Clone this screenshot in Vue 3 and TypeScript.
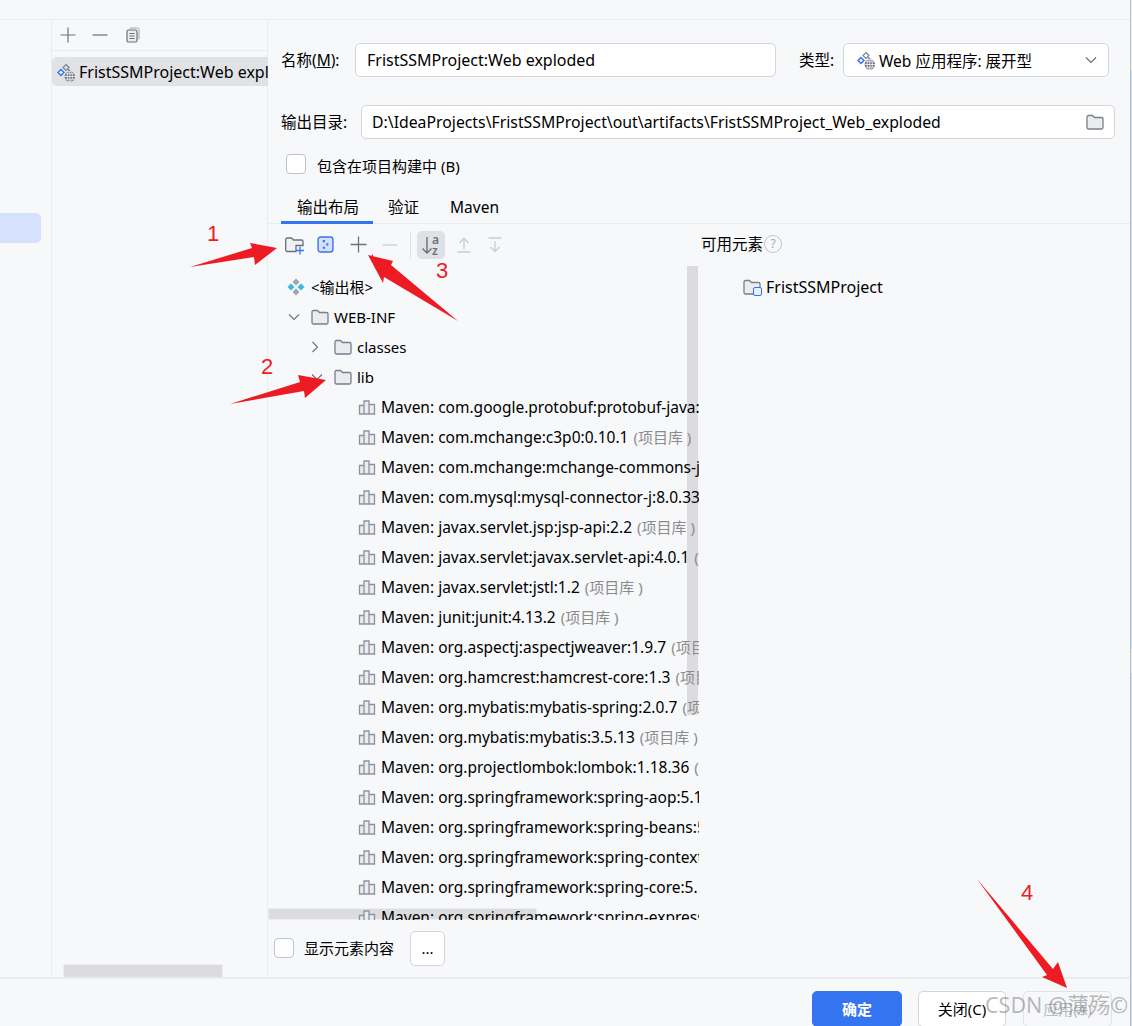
<script setup lang="ts">
interface Row { depth: number; icon: 'root' | 'folder' | 'lib'; text: string; chev?: 'down' | 'right'; suffix?: boolean }
const mavens: string[] = [
  'com.google.protobuf:protobuf-java:3.21.9',
  'com.mchange:c3p0:0.10.1',
  'com.mchange:mchange-commons-java:0.3.1',
  'com.mysql:mysql-connector-j:8.0.33',
  'javax.servlet.jsp:jsp-api:2.2',
  'javax.servlet:javax.servlet-api:4.0.1',
  'javax.servlet:jstl:1.2',
  'junit:junit:4.13.2',
  'org.aspectj:aspectjweaver:1.9.7',
  'org.hamcrest:hamcrest-core:1.3',
  'org.mybatis:mybatis-spring:2.0.7',
  'org.mybatis:mybatis:3.5.13',
  'org.projectlombok:lombok:1.18.36',
  'org.springframework:spring-aop:5.1.8',
  'org.springframework:spring-beans:5.1.8',
  'org.springframework:spring-context:5.1.8',
  'org.springframework:spring-core:5.1.8',
  'org.springframework:spring-expression:5.1.8',
]
const rows: Row[] = [
  { depth: 0, icon: 'root', text: '<输出根>' },
  { depth: 1, icon: 'folder', text: 'WEB-INF', chev: 'down' },
  { depth: 2, icon: 'folder', text: 'classes', chev: 'right' },
  { depth: 2, icon: 'folder', text: 'lib', chev: 'down' },
  ...mavens.map((m): Row => ({ depth: 3, icon: 'lib', text: 'Maven: ' + m, suffix: true })),
]
const arrows: string[] = [
  '190,267 252,248 250,243 277,248 255,265 254,257',
  '230,404 300,382 298,375 326,380 305,398 304,391',
  '458,321 391,265 393,261 368,255 383,283 384,277',
  '977,879 1053,969 1058,962 1067,988 1042,977 1047,975',
]
</script>

<template>
  <div class="app">
    <svg width="0" height="0" class="defs">
      <symbol id="artifact" viewBox="0 0 20 20">
        <path d="M10 2.500l3 3-3 3-3-3z" fill="none" stroke="#7e828f" stroke-width="1.200"/>
        <path d="M5 7.500l3 3-3 3-3-3z" fill="#e8effd" stroke="#3574f0" stroke-width="1.400"/>
        <path d="M12 7.500l2.500 2" fill="none" stroke="#3574f0" stroke-width="1.200"/>
        <circle cx="13.800" cy="14.500" r="5.200" fill="#6c707e"/>
        <path d="M8.600 14.500h10.400M13.800 9.300v10.400M9.600 11.800h8.400M9.600 17.200h8.400" stroke="#f7f8fa" stroke-width=".8"/>
        <ellipse cx="13.800" cy="14.500" rx="2.600" ry="5.200" fill="none" stroke="#f7f8fa" stroke-width=".8"/>
      </symbol>
      <symbol id="folder" viewBox="0 0 18 16">
        <path d="M1 3a1.500 1.500 0 0 1 1.500-1.500h4l2 2h7A1.500 1.500 0 0 1 17 5v8.500a1.500 1.500 0 0 1-1.500 1.500h-13A1.500 1.500 0 0 1 1 13.500z" fill="#ebecf0" stroke="#7a7e8b" stroke-width="1.300"/>
      </symbol>
      <symbol id="lib" viewBox="0 0 18 16">
        <path d="M1.500 6.500h4.500v8.500H1.500zM6 2h5v13H6zM11 5.500h5.500V15H11z" fill="#ebecf0" stroke="#8f929e" stroke-width="1.300"/>
      </symbol>
      <symbol id="root" viewBox="0 0 18 18">
        <path d="M9 .5l3.500 3.500L9 7.500 5.500 4z" fill="#9aa7b0"/>
        <path d="M4 5.500L7.500 9 4 12.500.5 9z" fill="#40b6e0"/>
        <path d="M14 5.500L17.500 9 14 12.500 10.500 9z" fill="#40b6e0"/>
        <path d="M9 10.500l3.500 3.500L9 17.500 5.500 14z" fill="#9aa7b0"/>
      </symbol>
    </svg>

    <div class="topstrip"></div>

    <div class="body">
      <aside class="side"><div class="side-sel"></div></aside>

      <section class="middle">
        <div class="mid-tools">
          <svg class="ic16" viewBox="0 0 16 16"><path d="M8 .5v15M.5 8h15" stroke="#6c707e" stroke-width="1.200" fill="none"/></svg>
          <svg class="ic16" viewBox="0 0 16 16"><path d="M.5 8h15" stroke="#6c707e" stroke-width="1.200" fill="none"/></svg>
          <svg class="ic16 copy" viewBox="0 0 16 16"><path d="M5 2.500V2a1 1 0 0 1 1-1h6.500a1.500 1.500 0 0 1 1.500 1.500V11a1 1 0 0 1-1 1" stroke="#a0a3ad" fill="none"/><rect x="2" y="3" width="10" height="12" rx="1.500" fill="#ebecf0" stroke="#6c707e" stroke-width="1.200"/><path d="M4.500 6.500h5M4.500 9h5M4.500 11.500h5" stroke="#6c707e"/></svg>
        </div>
        <div class="artifact-row">
          <svg class="ic20"><use href="#artifact"/></svg>
          <span>FristSSMProject:Web exploded</span>
        </div>
        <div class="mid-scroll"></div>
      </section>

      <main class="main">
        <div class="form-row first">
          <label class="lbl lbl-name">名称(<u>M</u>):</label>
          <div class="field name-field">FristSSMProject:Web exploded</div>
          <label class="lbl lbl-type">类型:</label>
          <div class="field type-field">
            <svg class="ic20"><use href="#artifact"/></svg>
            <span class="type-text">Web 应用程序: 展开型</span>
            <svg class="caret" viewBox="0 0 12 8"><path d="M1 1.500l5 5 5-5" fill="none" stroke="#6c707e" stroke-width="1.200"/></svg>
          </div>
        </div>

        <div class="form-row second">
          <label class="lbl lbl-out">输出目录:</label>
          <div class="field out-field">
            <span class="out-text">D:\IdeaProjects\FristSSMProject\out\artifacts\FristSSMProject_Web_exploded</span>
            <svg class="ic-folder-out"><use href="#folder"/></svg>
          </div>
        </div>

        <div class="check-row">
          <span class="checkbox"></span>
          <span class="check-text">包含在项目构建中 (B)</span>
        </div>

        <div class="tabs">
          <div class="tab active">输出布局</div>
          <div class="tab t2">验证</div>
          <div class="tab t3">Maven</div>
        </div>

        <div class="panes">
          <div class="left-pane">
            <div class="tree-tools">
              <svg class="tool t-folder" viewBox="0 0 20 20"><path d="M.7 15V4.500A1.500 1.500 0 0 1 2.200 3h4.300l2 2h8a1.500 1.500 0 0 1 1.500 1.500V10.500H11V16.500H2.200A1.500 1.500 0 0 1 .7 15z" fill="#f0f1f4" stroke="#6c707e" stroke-width="1.300"/><path d="M15 11.500v8M11 15.500h8" stroke="#3574f0" stroke-width="1.300"/></svg>
              <svg class="tool t-blue" viewBox="0 0 16 16"><rect x="1" y="1" width="14" height="14" rx="2.500" fill="#d5e1fb" stroke="#3574f0" stroke-width="1.300"/><path d="M5.500 3.800h2v2h-2zM8.700 6.900h2v2h-2zM5.500 10.100h2v2h-2z" fill="#3574f0"/></svg>
              <span class="plus-wrap">
                <svg class="tool t-plus" viewBox="0 0 16 16"><path d="M8 .5v15M.5 8h15" stroke="#6c707e" stroke-width="1.200"/></svg>
                <span class="corner"></span>
              </span>
              <svg class="tool t-minus" viewBox="0 0 16 16"><path d="M.5 8h15" stroke="#c9ccd6" stroke-width="1.200"/></svg>
              <span class="divider"></span>
              <span class="sort-btn">
                <svg viewBox="0 0 24 24" width="24" height="24"><path d="M9 4v16M4.500 15.500L9 20l4.500-4.500" fill="none" stroke="#6c707e" stroke-width="1.400"/></svg>
                <span class="az">a<br>z</span>
              </span>
              <svg class="tool t-up" viewBox="0 0 16 16"><path d="M8 12V1.500M3.500 6L8 1.500 12.500 6M1.500 15h13" fill="none" stroke="#c9ccd6" stroke-width="1.300"/></svg>
              <svg class="tool t-down" viewBox="0 0 16 16"><path d="M8 4v10.500M3.500 10L8 14.500 12.500 10M1.500 1h13" fill="none" stroke="#c9ccd6" stroke-width="1.300"/></svg>
            </div>
            <div class="tree">
              <div class="v-scroll"></div>
              <div class="h-scroll"></div>
              <div v-for="(r, i) in rows" :key="i" class="row" :class="'d' + r.depth">
                <span v-if="r.depth > 0" class="chev">
                  <svg v-if="r.chev === 'down'" viewBox="0 0 12 8" width="12" height="8"><path d="M1 1.500l5 5 5-5" fill="none" stroke="#6c707e" stroke-width="1.100"/></svg>
                  <svg v-else-if="r.chev === 'right'" viewBox="0 0 8 12" width="8" height="12"><path d="M1.500 1l5 5-5 5" fill="none" stroke="#6c707e" stroke-width="1.100"/></svg>
                </span>
                <svg class="row-ic"><use :href="'#' + r.icon"/></svg>
                <span class="row-text">{{ r.text }}</span>
                <span v-if="r.suffix" class="suffix">(项目库 )</span>
              </div>
            </div>
            <div class="show-row">
              <span class="checkbox small"></span>
              <span>显示元素内容</span>
              <button class="dots" type="button">...</button>
            </div>
          </div>

          <div class="right-pane">
            <div class="avail">可用元素<span class="help">?</span></div>
            <div class="avail-item">
              <span class="avail-ic">
                <svg class="avail-folder"><use href="#folder"/></svg>
                <span class="avail-badge"></span>
              </span>
              <span>FristSSMProject</span>
            </div>
          </div>
        </div>
      </main>
    </div>

    <footer class="footer">
      <button class="btn primary" type="button">确定</button>
      <button class="btn close" type="button">关闭(C)</button>
      <button class="btn disabled" type="button">应用(A)</button>
    </footer>

    <svg class="marks" viewBox="0 0 1132 1026" width="1132" height="1026">
      <polygon v-for="(p, i) in arrows" :key="i" :points="p" fill="#ed1c24"/>
    </svg>
    <span class="num n1">1</span>
    <span class="num n2">2</span>
    <span class="num n3">3</span>
    <span class="num n4">4</span>
    <span class="watermark">CSDN @薄殇©</span>
    <span class="edge"></span>
  </div>
</template>

<style>
html, body { margin: 0; padding: 0; background: #f7f8fa; }
</style>

<style scoped>
* { box-sizing: border-box; }
.app {
  position: relative;
  width: 1132px;
  height: 1026px;
  overflow: hidden;
  display: flex;
  flex-direction: column;
  background: #f7f8fa;
  color: #000;
  font: 15.5px/20px "Noto Sans", "Noto Sans CJK SC", sans-serif;
}
.defs { position: absolute; }
.topstrip { height: 20px; flex: none; border-bottom: 1px solid #ebecf0; }
.body { flex: 1; display: flex; min-height: 0; }
.side { width: 52px; flex: none; border-right: 1px solid #ebecf0; padding-top: 193px; }
.side-sel { width: 41px; height: 30px; background: #d5e1ff; border-radius: 0 5px 5px 0; }
.middle { position: relative; width: 216px; flex: none; border-right: 1px solid #ebecf0; }
.mid-tools {
  height: 31px;
  display: flex;
  align-items: center;
  gap: 16px;
  padding-left: 8px;
  border-bottom: 1px solid #ebecf0;
}
.ic16 { width: 16px; height: 16px; }
.copy { margin-left: 1px; }
.artifact-row {
  margin-top: 6px;
  height: 29px;
  display: flex;
  align-items: center;
  gap: 3px;
  padding-left: 4px;
  margin-right: -1px;
  background: #e1e2e6;
  border-radius: 5px 0 0 5px;
  white-space: nowrap;
  overflow: hidden;
  font-size: 16px;
}
.ic20 { width: 20px; height: 20px; flex: none; }
.mid-scroll { position: absolute; left: 11px; bottom: 0; width: 160px; height: 13px; background: #dcdcde; border: 1px solid #eceef1; border-bottom: 0; }
.main { flex: 1; min-width: 0; display: flex; flex-direction: column; padding-top: 23px; }
.form-row { display: flex; align-items: center; height: 34px; padding-left: 13px; }
.second { margin-top: 28px; }
.lbl { white-space: nowrap; }
.field {
  height: 34px;
  background: #fff;
  border: 1px solid #d3d5db;
  border-radius: 5px;
  display: flex;
  align-items: center;
}
.lbl-name { width: 74px; }
.name-field { width: 421px; padding-left: 11px; font-size: 16px; }
.lbl-type { margin-left: 23px; width: 44px; }
.type-field { width: 266px; padding-left: 12px; padding-right: 11px; }
.type-text { margin-left: 3px; flex: 1; position: relative; top: 1px; }
.caret { width: 12px; height: 8px; }
.lbl-out { width: 80px; }
.out-field { width: 754px; padding-left: 10px; justify-content: space-between; padding-right: 10px; font-size: 15.8px; }
.ic-folder-out { width: 18px; height: 16px; }
.check-row { display: flex; align-items: center; gap: 11px; margin: 15px 0 0 18px; height: 20px; font-size: 15px; }
.check-text { position: relative; top: 2px; }
.checkbox {
  display: block;
  width: 20px;
  height: 20px;
  background: #fff;
  border: 1px solid #c0c3cf;
  border-radius: 4px;
  flex: none;
}
.tabs { display: flex; height: 33px; margin-top: 17px; border-bottom: 1px solid #ebecf0; padding-left: 13px; }
.tab { padding-top: 6px; }
.active { width: 92px; padding-left: 16px; border-bottom: 3px solid #3574f0; height: 33px; }
.t2 { margin-left: 15px; }
.t3 { margin-left: 31px; }
.panes { flex: 1; display: flex; min-height: 0; }
.left-pane { width: 431px; flex: none; display: flex; flex-direction: column; }
.tree-tools { height: 34px; flex: none; padding: 7px 0 0 17px; display: flex; align-items: center; }
.tool { width: 18px; height: 18px; flex: none; }
.t-folder { width: 20px; height: 20px; }
.t-blue { width: 17px; height: 17px; margin-left: 12px; }
.plus-wrap { position: relative; display: flex; margin-left: 16px; }
.t-plus { width: 17px; height: 17px; }
.corner { position: absolute; right: -6px; bottom: -5px; width: 0; height: 0; border-left: 4px solid transparent; border-bottom: 4px solid #6c707e; }
.t-minus { width: 16px; height: 16px; margin-left: 15px; }
.divider { width: 1px; height: 26px; margin-left: 12px; background: #dfe1e5; }
.sort-btn {
  position: relative;
  width: 28px;
  height: 28px;
  margin-left: 6px;
  background: #dfe1e5;
  border-radius: 5px;
  display: flex;
  align-items: center;
  padding-left: 1px;
}
.az { position: absolute; left: 15px; top: 3px; font-size: 12px; line-height: 11px; color: #6c707e; font-weight: 600; }
.t-up { width: 16px; height: 16px; margin-left: 11px; }
.t-down { width: 16px; height: 16px; margin-left: 15px; }
.tree { position: relative; flex: none; height: 662px; overflow: hidden; padding-top: 14px; }
.v-scroll { position: absolute; left: 419px; top: 8px; width: 11px; height: 449px; background: #dcdcde; }
.h-scroll { position: absolute; left: 0; top: 650px; width: 269px; height: 12px; background: #dcdcde; border: 1px solid #eceef1; }
.row { position: relative; height: 30px; display: flex; align-items: center; white-space: nowrap; overflow: hidden; font-size: 15px; }
.d3 { font-size: 15.5px; }
.d0 { padding-left: 19px; }
.d1 { padding-left: 20px; }
.d2 { padding-left: 43px; }
.d3 { padding-left: 67px; }
.chev { width: 24px; height: 30px; flex: none; display: flex; align-items: center; padding-left: 1px; margin-left: -1px; }
.d3 .chev { display: block; }
.row-ic { width: 18px; height: 16px; flex: none; }
.d0 .row-ic { width: 18px; height: 18px; }
.row-text { margin-left: 5px; }
.d0 .row-text { margin-left: 6px; }
.suffix { margin-left: 5px; color: #8c8c8c; font-size: 15px; }
.show-row { display: flex; align-items: center; padding-left: 6px; height: 44px; margin-top: 6px; position: relative; font-size: 15px; }
.small { margin-right: 10px; }
.dots {
  width: 35px;
  height: 35px;
  margin-left: 16px;
  background: #fff;
  border: 1px solid #d3d5db;
  border-radius: 5px;
  font: inherit;
  padding: 0;
}
.right-pane { flex: 1; }
.avail { height: 34px; padding: 5px 0 0 2px; display: flex; align-items: center; }
.help {
  width: 18px;
  height: 18px;
  margin-left: 1px;
  border: 1px solid #c0c3cf;
  border-radius: 50%;
  color: #a0a5b5;
  font-size: 12px;
  line-height: 16px;
  text-align: center;
}
.avail-item { display: flex; align-items: center; height: 30px; margin-top: 14px; padding-left: 44px; gap: 5px; font-size: 16px; }
.avail-ic { position: relative; display: block; width: 18px; height: 16px; }
.avail-folder { width: 18px; height: 16px; display: block; }
.avail-badge { position: absolute; right: -1px; bottom: -1px; width: 9px; height: 9px; background: #e8effd; border: 1px solid #3574f0; border-radius: 2px; }
.footer {
  height: 49px;
  flex: none;
  border-top: 2px solid #ebecf0;
  display: flex;
  gap: 16px;
  padding: 12px 20px 0 0;
  justify-content: flex-end;
  font-size: 15px;
}
.btn {
  width: 90px;
  height: 36px;
  background: #fff;
  border: 1px solid #d3d5db;
  border-radius: 5px;
  font: inherit;
  color: #000;
  padding: 0;
}
.close { width: 88px; margin-right: 1px; }
.primary { background: #3574f0; border-color: #3574f0; color: #fff; font-weight: 600; }
.disabled { width: 89px; background: transparent; color: #b8bac0; border-color: #e1e2e6; }
.marks { position: absolute; left: 0; top: 0; pointer-events: none; }
.num { position: absolute; color: #ed1c24; font: 22px/24px "Liberation Sans", sans-serif; }
.n1 { left: 207px; top: 222px; }
.n2 { left: 261px; top: 355px; }
.n3 { left: 436px; top: 259px; }
.n4 { left: 1021px; top: 881px; }
.watermark {
  position: absolute;
  left: 985px;
  top: 992px;
  font: 21.500px/26px "Noto Sans", "Noto Sans CJK SC", sans-serif;
  color: rgba(90, 90, 90, 0.42);
  white-space: nowrap;
}
.edge {
  position: absolute;
  right: 0;
  top: 0;
  bottom: 0;
  width: 2px;
  background:
    linear-gradient(#b9bec6, #b9bec6) left top / 1px 100% no-repeat,
    linear-gradient(#f2f3f5 0 70px, #c5e3f8 70px 649px, #eceef1 649px 673px, #c5e3f8 673px) right top / 1px 100% no-repeat;
}
</style>
